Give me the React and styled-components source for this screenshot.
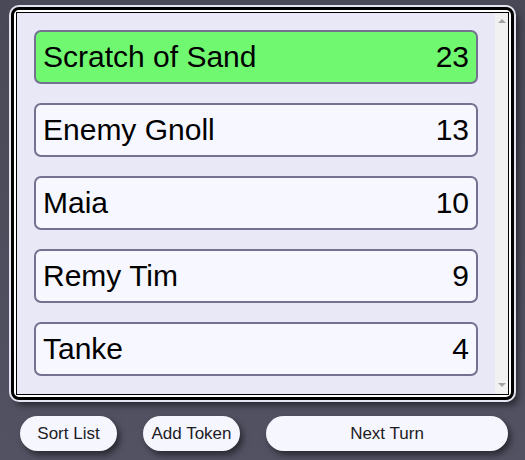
import React from 'react';
import styled, { createGlobalStyle } from 'styled-components';

const tokens = [
  { name: 'Scratch of Sand', initiative: 23, active: true },
  { name: 'Enemy Gnoll', initiative: 13 },
  { name: 'Maia', initiative: 10 },
  { name: 'Remy Tim', initiative: 9 },
  { name: 'Tanke', initiative: 4 },
];

const GlobalStyle = createGlobalStyle`
  html, body {
    margin: 0;
    padding: 0;
    background: #4e4d5e;
    font-family: "Liberation Sans", Arial, sans-serif;
  }
`;

const App = () => (
  <Page>
    <GlobalStyle />
    <Panel>
      <Frame>
        <List>
          {tokens.map((t) => (
            <Row key={t.name} active={t.active}>
              <span>{t.name}</span>
              <span>{t.initiative}</span>
            </Row>
          ))}
        </List>
        <ScrollTrack>
          <Arrow dir="up" />
          <Arrow dir="down" />
        </ScrollTrack>
      </Frame>
    </Panel>
    <Footer>
      <PillButton width="97px">Sort List</PillButton>
      <PillButton width="97px">Add Token</PillButton>
      <PillButton grow>Next Turn</PillButton>
    </Footer>
  </Page>
);

export default App;

const Page = styled.div`
  width: 525px;
  height: 460px;
  box-sizing: border-box;
  padding: 7px 10px 0 11px;
  background: linear-gradient(180deg, #4a4957 0%, #535263 100%);
`;

const Panel = styled.div`
  box-sizing: border-box;
  width: 503px;
  background: #ffffff;
  border: 3px solid #000;
  border-radius: 8px;
  padding: 2px;
  box-shadow: 0 0 0 2px #e4e4f0, 4px 5px 7px rgba(0, 0, 0, 0.55);
`;

const Frame = styled.div`
  display: flex;
  box-sizing: border-box;
  height: 383px;
  border: 1px solid #000;
  background: #e8e8f6;
`;

const List = styled.div`
  flex: 1;
  overflow: hidden;
  padding: 17px;
  display: flex;
  flex-direction: column;
  gap: 19px;
`;

const ScrollTrack = styled.div`
  flex: none;
  width: 13px;
  background: #f1f1f1;
  display: flex;
  flex-direction: column;
  justify-content: space-between;
  align-items: center;
  padding: 6px 0 7px;
`;

const Arrow = styled.span`
  width: 0;
  height: 0;
  border-left: 4px solid transparent;
  border-right: 4px solid transparent;
  ${(p) =>
    p.dir === 'up'
      ? 'border-bottom: 4px solid #a3a3a3;'
      : 'border-top: 4px solid #a3a3a3;'}
`;

const Row = styled.div`
  flex: none;
  box-sizing: border-box;
  height: 54px;
  display: flex;
  align-items: center;
  justify-content: space-between;
  padding: 0 7px;
  border: 2px solid #737391;
  border-radius: 7px;
  background: ${(p) => (p.active ? '#70f870' : '#f7f7ff')};
  color: #000;
  font-size: 30px;
`;

const Footer = styled.div`
  display: flex;
  gap: 26px;
  margin-top: 16px;
  padding: 0 7px 0 9px;
`;

const PillButton = styled.button`
  flex: ${(p) => (p.grow ? '1' : 'none')};
  width: ${(p) => p.width || 'auto'};
  height: 35px;
  border: none;
  border-radius: 18px;
  background: #f6f6ff;
  color: #1c1c24;
  font-family: "Liberation Sans", Arial, sans-serif;
  font-size: 17px;
  padding: 0;
  box-shadow: 3px 4px 6px rgba(0, 0, 0, 0.5);
`;
